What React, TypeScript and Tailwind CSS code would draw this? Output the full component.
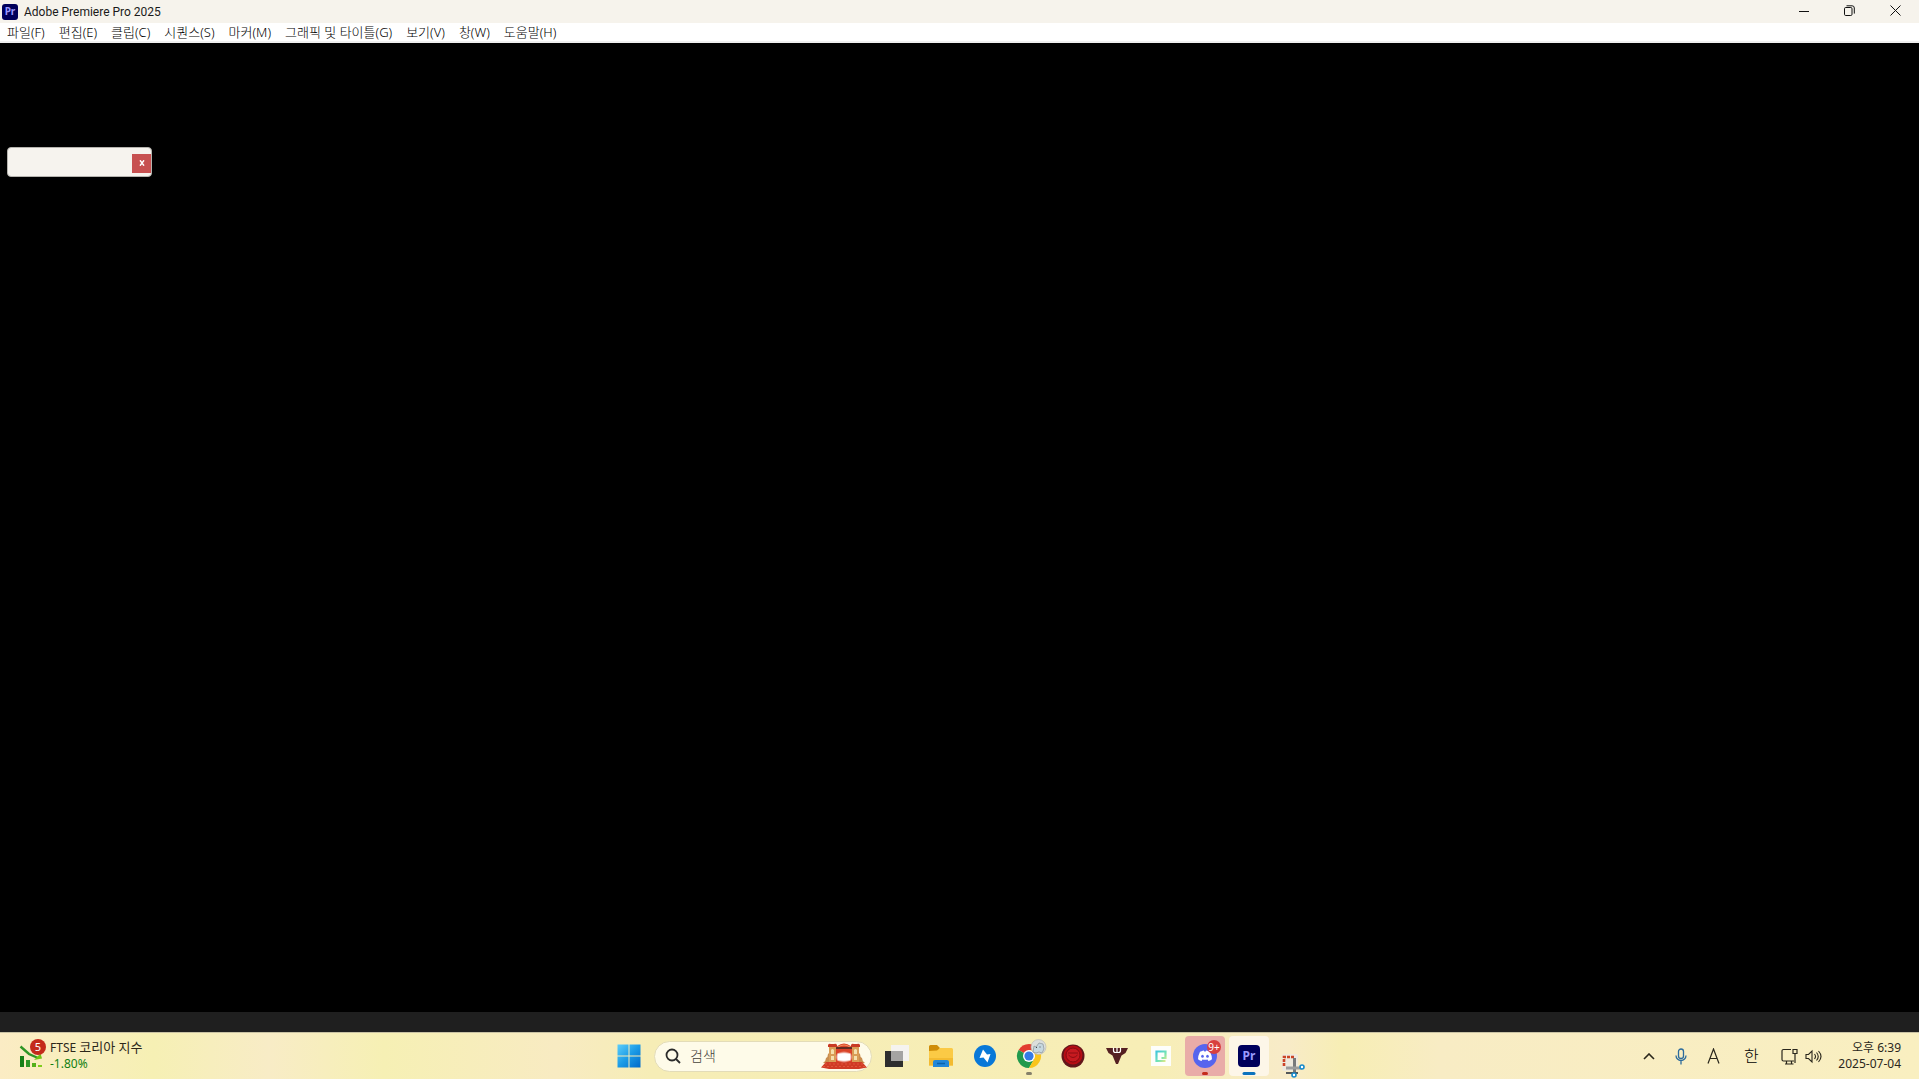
import { useState } from 'react';
import type { ReactNode } from 'react';

const menus = [
    '파일(F)',
    '편집(E)',
    '클립(C)',
    '시퀀스(S)',
    '마커(M)',
    '그래픽 및 타이틀(G)',
    '보기(V)',
    '창(W)',
    '도움말(H)',
];

const PremiereIcon = ({ className }: { className: string }) => (
    <span className={`flex items-center justify-center bg-[#00005b] font-bold text-[#9a9aff] ${className}`}>Pr</span>
);

const TitleBar = () => (
    <header className="flex h-[23px] items-center justify-between bg-[#f6f3ec]">
        <div className="flex items-center gap-[6px] pl-[2px]">
            <PremiereIcon className="h-4 w-4 rounded-[3px] text-[10px]" />
            <h1 className="font-['Roboto','Noto_Sans',sans-serif] text-[12px] leading-4 text-[#1a1a1a]">
                Adobe Premiere Pro 2025
            </h1>
        </div>
        <div className="flex h-[21px] self-start pr-px">
            <button aria-label="Minimize" className="flex w-[45px] items-center justify-center">
                <svg width="10" height="10" viewBox="0 0 10 10" stroke="#111" fill="none">
                    <path d="M0 5.5h10" />
                </svg>
            </button>
            <button aria-label="Restore" className="flex w-[46px] items-center justify-center">
                <svg width="11" height="11" viewBox="0 0 11 11" stroke="#111" fill="none">
                    <rect x="0.5" y="2.5" width="7.5" height="8" rx="1.2" />
                    <path d="M2.5 0.8h5.6a2.2 2.2 0 0 1 2.2 2.2v5.6" />
                </svg>
            </button>
            <button aria-label="Close" className="flex w-[46px] items-center justify-center">
                <svg width="11" height="11" viewBox="0 0 11 11" stroke="#111" fill="none">
                    <path d="M0.5 0.5l10 10M10.5 0.5l-10 10" />
                </svg>
            </button>
        </div>
    </header>
);

const MenuBar = () => (
    <nav className="flex h-5 items-center gap-[14px] border-b-2 border-[#f0f0f0] bg-white pl-[7px]">
        {menus.map((menu) => (
            <button key={menu} className="text-[13px] leading-4 font-light whitespace-nowrap text-black">
                {menu}
            </button>
        ))}
    </nav>
);

const FloatingPanel = ({ onClose }: { onClose: () => void }) => (
    <div className="absolute top-[104px] left-[7px] flex h-[30px] w-[145px] items-center justify-end rounded-[4px] border border-[#b5b3ae] bg-[#f6f3ee] pt-[2px]">
        <button
            aria-label="Close panel"
            onClick={onClose}
            className="flex h-[19px] w-[19px] items-center justify-center bg-[#c75050]"
        >
            <svg width="6" height="6" viewBox="0 0 6 6" stroke="#fff" strokeWidth="1.5">
                <path d="M1 0.3l4 5.4M5 0.3L1 5.700" />
            </svg>
        </button>
    </div>
);

const StocksIcon = () => (
    <svg width="28" height="28" viewBox="0 0 28 28">
        <path d="M1.500 7.500L10 15l9 4" stroke="#2f9626" strokeWidth="2.400" fill="none" />
        <path d="M15 21l8-1.500-1.500-5z" fill="#72c514" />
        <path d="M1 17h4v11H1z" fill="#178017" />
        <path d="M7 21h4v7H7z" fill="#2f9626" />
        <path d="M13 24h4v4h-4z" fill="#55b01c" />
        <path d="M19 26h4v2h-4z" fill="#82cc1c" />
        <circle cx="19" cy="8" r="8" fill="#c42b1c" />
        <text x="19" y="12" fontSize="11" fill="#fff" textAnchor="middle">5</text>
    </svg>
);

const WindowsIcon = () => (
    <svg width="24" height="24" viewBox="0 0 24 24">
        <defs>
            <linearGradient id="win" gradientUnits="userSpaceOnUse" x1="0" y1="0" x2="24" y2="24">
                <stop offset="0" stopColor="#5fd0fb" />
                <stop offset="0.5" stopColor="#1b9be6" />
                <stop offset="1" stopColor="#0067c8" />
            </linearGradient>
        </defs>
        <path d="M0.5 0.5h11v11h-11zM12.5 0.5h11v11h-11zM0.5 12.5h11v11h-11zM12.5 12.5h11v11h-11z" fill="url(#win)" />
    </svg>
);

const StageIcon = () => (
    <svg width="46" height="26" viewBox="0 0 46 26">
        <defs>
            <radialGradient id="glow">
                <stop offset="0.5" stopColor="#fff" />
                <stop offset="1" stopColor="#fff" stopOpacity="0" />
            </radialGradient>
        </defs>
        {/* side wings */}
        <path d="M2 20q3-2 3-5 2-1 2-4 2-1 2-5v15z" fill="#c98d4e" />
        <path d="M44 20q-3-2-3-5-2-1-2-4-2-1-2-5v15z" fill="#c98d4e" />
        {/* dome and towers */}
        <path d="M14 8q1-7 9-7.500 8 .5 9 7.500v11H14z" fill="#da4328" />
        <path d="M17 4q6-4 12 0" stroke="#f3925f" fill="none" />
        <path d="M8 3h7v17H8zM31 3h7v17h-7z" fill="#d99c55" />
        <path d="M7 2q1-2 3-1h3q2-1 3 1v2H7zM30 2q1-2 3-1h3q2-1 3 1v2h-9z" fill="#c93a24" />
        <path d="M10 7q1.500-2 3 0v4h-3zM10 13h3v4h-3zM33 7q1.500-2 3 0v4h-3zM33 13h3v4h-3z" fill="#f5e0ad" />
        {/* stairs */}
        <path d="M0 24.500l5-5.500h36l5 5.500-8 1.500H8z" fill="#d03b25" />
        <path d="M4 21h38M2 23.500h42" stroke="#e0553b" strokeDasharray="2 2" />
        <ellipse cx="23" cy="14" rx="9" ry="6" fill="url(#glow)" />
        <path d="M16.500 10.500h13v7h-13z" fill="#fff" />
        <path d="M15 5h16" stroke="#3b2520" strokeWidth="1.500" />
    </svg>
);

const TaskViewIcon = () => (
    <svg width="24" height="24" viewBox="0 0 24 24">
        <path d="M0 7h18v16H0z" fill="#2e2e2e" />
        <path d="M6 1h18v16H6z" fill="#f5f3ef" />
        <path d="M6 7h12v10H6z" fill="#a5a4a2" />
    </svg>
);

const FolderIcon = () => (
    <svg width="24" height="24" viewBox="0 0 24 24">
        <path d="M0 2.5A1.5 1.5 0 0 1 1.500 1H8l3 3-2 4H0z" fill="#cf8d08" />
        <path d="M0 7l8-0.500L11 4h11.500A1.500 1.500 0 0 1 24 5.500V21.500H0z" fill="#fbca45" />
        <path d="M0 14h24v7.500H0z" fill="#f3bb31" />
        <path d="M4 23v-5a2 2 0 0 1 2-2h12a2 2 0 0 1 2 2v5z" fill="#2287d8" />
        <path d="M8 19.500h8" stroke="#0a62ac" strokeWidth="1.500" />
    </svg>
);

const BoltIcon = () => (
    <svg width="24" height="24" viewBox="0 0 24 24">
        <circle cx="12" cy="12" r="11" fill="#0878d8" />
        <path d="M10 5.500l4 5 3.500-0.500-3 8.500-4-5-4 0.500z" fill="#fff" />
    </svg>
);

const ChromeIcon = () => (
    <svg width="36" height="36" viewBox="-3 0 36 36">
        <path d="M15 18L4.600 12a12 12 0 0 1 20.800 0z" fill="#e23c30" />
        <path d="M4.600 12A12 12 0 0 0 15 30l5.200-9L15 18z" fill="#219a4c" />
        <path d="M25.400 12A12 12 0 0 1 15 30l5.200-9L15 12z" fill="#f9c51c" />
        <circle cx="15" cy="18" r="6" fill="#fff" />
        <circle cx="15" cy="18" r="4.600" fill="#357be5" />
        <circle cx="24.500" cy="9" r="7.500" fill="#dcdfdc" stroke="#b5b7b3" strokeWidth="0.600" />
        <path d="M19 14l1-6 2 1 3-4 4 1 1 5-2 4-3-1-3 1z" fill="#c6d8e0" stroke="#8b9498" strokeWidth="0.700" />
        <path d="M22.500 9v1M26 8.500v1" stroke="#444" />
    </svg>
);

const RedButtonIcon = () => (
    <svg width="24" height="24" viewBox="0 0 24 24">
        <circle cx="12" cy="12" r="11.500" fill="#63161a" />
        <circle cx="12" cy="11" r="9.500" fill="#b70d14" />
        <circle cx="12" cy="11" r="7" fill="#c71a20" stroke="#850b11" />
        <path d="M7 9h10M7.500 11q4.500 5 9 0" stroke="#8c0c12" fill="none" />
    </svg>
);

const BullIcon = () => (
    <svg width="24" height="24" viewBox="0 0 24 24">
        <path d="M1 4h22l-2.500 5-4 2.500-3.500 8.500h-2l-3.500-8.500-4-2.500z" fill="#552022" />
        <path d="M8.500 3.500v3q0 2 2 2h3q2 0 2-2v-3M12 3.500v5" stroke="#fff" strokeWidth="1.200" fill="none" />
    </svg>
);

const CaptureIcon = () => (
    <svg width="20" height="20" viewBox="0 0 20 20">
        <defs>
            <linearGradient id="cap" x1="0" y1="0" x2="1" y2="1">
                <stop offset="0" stopColor="#42c6dc" />
                <stop offset="0.6" stopColor="#74e4b4" />
                <stop offset="1" stopColor="#dfe886" />
            </linearGradient>
        </defs>
        <path d="M0 0h20v20H0z" fill="#fdfefb" />
        <path d="M10.500 12H14.500V5.500H5.500v9.500h9" fill="none" stroke="url(#cap)" strokeWidth="2.200" />
    </svg>
);

const DiscordIcon = () => (
    <svg width="32" height="32" viewBox="-4 0 32 32">
        <circle cx="12" cy="16" r="12" fill="#5765ee" />
        <path
            d="M8.500 11.200q1.600-.8 2.300-.7l.5.900h1.400l.5-.900q.7-.1 2.300.7l1.500.5q2 4 2 7.500-2 1.600-3.600 1.700l-.8-1.400q-2.600.6-5.200 0l-.8 1.400q-1.600-.1-3.600-1.700 0-3.500 2-7.500z"
            fill="#fff"
        />
        <ellipse cx="9.500" cy="16.200" rx="1.300" ry="1.500" fill="#5765ee" />
        <ellipse cx="14.500" cy="16.200" rx="1.300" ry="1.500" fill="#5765ee" />
        <circle cx="21" cy="7" r="7" fill="#d8403f" />
        <text x="21" y="11" fontSize="10" fill="#fff" textAnchor="middle">9+</text>
    </svg>
);

const SnipIcon = () => (
    <svg width="24" height="24" viewBox="0 -2 24 24" className="overflow-visible">
        <rect x="1" y="0" width="16" height="17" rx="2" fill="#eee9dd" />
        <path d="M13 3H3v10" fill="none" stroke="#cc4426" strokeWidth="2.600" strokeDasharray="3 1" />
        <path d="M13.500 4v15" stroke="#77797b" strokeWidth="3" />
        <path d="M5 14h16" stroke="#9b9c9c" strokeWidth="3" />
        <path d="M5 19h12" stroke="#54585b" strokeWidth="2" />
        <circle cx="21" cy="13" r="2" fill="#fff" stroke="#168acb" strokeWidth="1.600" />
        <circle cx="13" cy="21" r="2" fill="#fff" stroke="#168acb" strokeWidth="1.600" />
    </svg>
);

type TaskButtonProps = {
    label: string;
    children: ReactNode;
    className?: string;
    indicator?: string;
};

const TaskButton = ({ label, children, className = 'items-center', indicator }: TaskButtonProps) => (
    <button
        aria-label={label}
        className={`relative mx-[2px] flex h-10 w-10 justify-center rounded-[4px] ${className}`}
    >
        {children}
        {indicator && <span className={`absolute bottom-px left-1/2 h-[3px] -translate-x-1/2 rounded-full ${indicator}`} />}
    </button>
);

const Taskbar = () => {
    const [query, setQuery] = useState('');

    return (
        <footer className="grid h-[47px] grid-cols-[1fr_auto_1fr] items-center border-t border-[#c9c2a4] bg-[linear-gradient(90deg,#fbecc4_0%,#f6f0b4_8%,#f8ecc6_14%,#f6f0b4_20%,#f8ebc2_29%,#f6edb6_34%,#f7eeb6_60%,#f8ebc8_67%,#f7eeb4_70%,#f8ecc4_75%,#f9efc0_100%)]">
            <button className="flex items-start justify-self-start pb-[2px] pl-[19px] text-left">
                <StocksIcon />
                <span className="flex flex-col pl-[3px] text-[12px] leading-4">
                    <span className="text-[#2c2719]">
                        FTSE <span className="text-[13px]">코리아 지수</span>
                    </span>
                    <span className="text-[#128012]">-1.80%</span>
                </span>
            </button>

            <div className="flex items-center">
                <button aria-label="시작" className="flex h-10 w-[50px] items-center justify-center">
                    <WindowsIcon />
                </button>
                <label className="mr-[3px] flex h-[31px] w-[218px] items-center rounded-full border border-[#e3dcb8] bg-[#fefbe9] pr-1 pl-[10px]">
                    <svg width="16" height="16" viewBox="0 0 16 16" fill="none" stroke="#2b2b2b" strokeWidth="1.8">
                        <circle cx="7" cy="7" r="5.500" />
                        <path d="M11 11l4 4" />
                    </svg>
                    <input
                        type="text"
                        aria-label="검색"
                        placeholder="검색"
                        value={query}
                        onChange={(e) => setQuery(e.target.value)}
                        className="ml-[9px] min-w-0 flex-1 text-[14px] leading-5 font-light outline-none placeholder:text-[#45433b]"
                    />
                    <StageIcon />
                </label>
                <TaskButton label="작업 보기"><TaskViewIcon /></TaskButton>
                <TaskButton label="파일 탐색기"><FolderIcon /></TaskButton>
                <TaskButton label="Bolt"><BoltIcon /></TaskButton>
                <TaskButton label="Chrome" indicator="w-[6px] bg-[#85806a]"><ChromeIcon /></TaskButton>
                <TaskButton label="Record"><RedButtonIcon /></TaskButton>
                <TaskButton label="Bull"><BullIcon /></TaskButton>
                <TaskButton label="Capture"><CaptureIcon /></TaskButton>
                <TaskButton label="Discord" className="items-center bg-[#e9aca8]" indicator="w-[6px] bg-[#c42b1c]">
                    <DiscordIcon />
                </TaskButton>
                <TaskButton label="Premiere Pro" className="items-center bg-[#fdf6e8]" indicator="w-[13px] bg-[#0c73bd]">
                    <PremiereIcon className="h-[22px] w-[22px] rounded-[4px] text-[12px]" />
                </TaskButton>
                <TaskButton label="캡처 도구" className="items-end"><SnipIcon /></TaskButton>
            </div>

            <div className="flex items-center justify-self-end pr-[18px] text-[#2a271c]">
                <button aria-label="숨겨진 아이콘" className="flex w-8 justify-center">
                    <svg width="12" height="7" viewBox="0 0 12 7" fill="none" stroke="currentColor" strokeWidth="1.600">
                        <path d="M1 6l5-5 5 5" />
                    </svg>
                </button>
                <button aria-label="마이크" className="flex w-8 justify-center">
                    <svg width="12" height="17" viewBox="0 0 12 17" fill="none" stroke="#2c6b9c" strokeWidth="1.300">
                        <rect x="3.500" y="1" width="5" height="9.500" rx="2.500" />
                        <path d="M1 7.500a5 5 0 0 0 10 0M6 13v3.500" />
                    </svg>
                </button>
                <button aria-label="입력 모드" className="flex w-8 justify-center">
                    <svg width="13" height="16" viewBox="0 0 13 16" fill="none" stroke="currentColor" strokeWidth="1.200">
                        <path d="M1 15.500L6.500 1 12 15.500M3 10.500h7" />
                    </svg>
                </button>
                <button className="w-11 text-center text-[16px] leading-5 font-light text-black">한</button>
                <button aria-label="네트워크 및 볼륨" className="flex items-center gap-[7px] pl-2">
                    <svg width="17" height="17" viewBox="0 0 17 17" fill="none" stroke="currentColor" strokeWidth="1.200">
                        <path d="M10 1.500H2.500a1.500 1.500 0 0 0-1.500 1.500v8.500a1.500 1.500 0 0 0 1.500 1.500H13M5.500 13v3M10.500 13v3M4 16h8.500" />
                        <path d="M12 1.500h4v4h-4zM14 5.500V15" />
                    </svg>
                    <svg width="17" height="15" viewBox="0 0 17 15" fill="none" stroke="currentColor" strokeWidth="1.100">
                        <path d="M1 5.500h2.500L7 2v11L3.500 9.500H1z" />
                        <path d="M9.500 5q2 2.500 0 5M11.500 3.500q3.500 4 0 8M13.500 2q5 5.500 0 11" />
                    </svg>
                </button>
                <button className="pl-4 text-right text-[12px] leading-4 whitespace-nowrap">
                    <span className="block">오후 6:39</span>
                    <span className="block">2025-07-04</span>
                </button>
            </div>
        </footer>
    );
};

const App = () => {
    const [panelOpen, setPanelOpen] = useState(true);

    return (
        <div className="flex h-screen flex-col overflow-hidden bg-black font-['Noto_Sans','Noto_Sans_CJK_KR',sans-serif]">
            <TitleBar />
            <MenuBar />
            <main className="relative flex-1 bg-black">
                {panelOpen && <FloatingPanel onClose={() => setPanelOpen(false)} />}
            </main>
            <div className="h-5 bg-[#1f1f1f]" />
            <Taskbar />
        </div>
    );
};

export default App;
